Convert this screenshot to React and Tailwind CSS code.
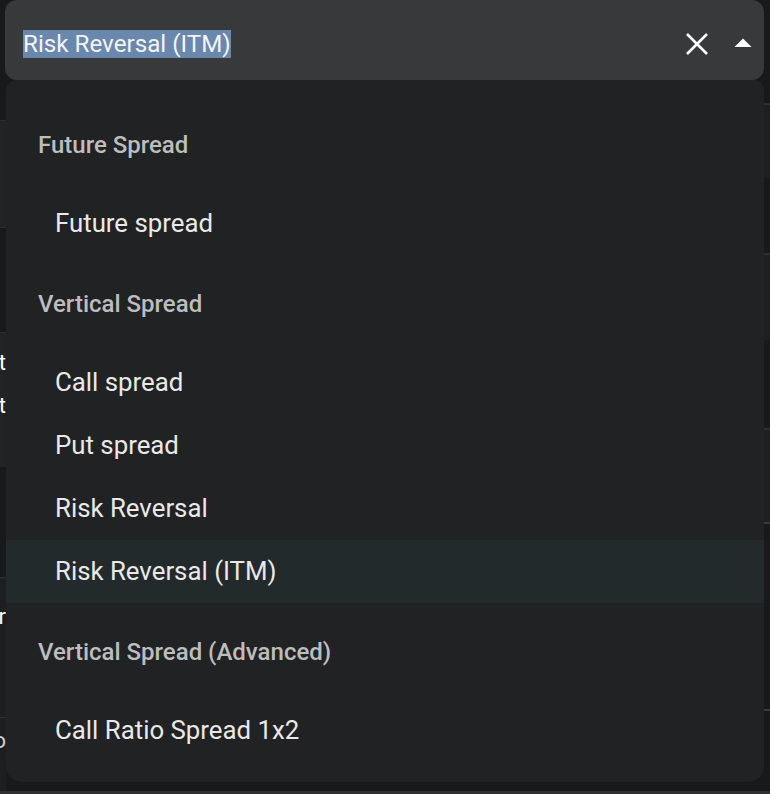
import React from "react";

const groups = [
  { title: "Future Spread", items: ["Future spread"] },
  { title: "Vertical Spread", items: ["Call spread", "Put spread", "Risk Reversal", "Risk Reversal (ITM)"] },
  { title: "Vertical Spread (Advanced)", items: ["Call Ratio Spread 1x2", "Call Ratio Spread 1x3"] },
];

function Header({ children }) {
  return (
    <div className="h-[96px] shrink-0 flex items-center pl-[32px] pt-[1px] text-[24px] font-medium text-[#bdbdbe]">
      {children}
    </div>
  );
}

function Item({ children, active }) {
  return (
    <div
      className={
        "h-[63px] shrink-0 flex items-center pl-[49px] text-[25.8px] text-[#e9e9e9] " +
        (active ? "bg-[#232a2b]" : "")
      }
    >
      {children}
    </div>
  );
}

export default function App() {
  return (
    <div className="relative w-[770px] h-[794px] bg-[#18191b] overflow-hidden font-['Roboto',sans-serif]">
      {/* Input */}
      <div className="mx-[5px] w-[759px] h-[80px] rounded-[12px] bg-[#38393b] flex items-center pt-[8px] pl-[18px] pr-[12px]">
        <span className="bg-[#6a87ad] text-[#f4f4f4] text-[24.2px] leading-[28px]">Risk Reversal (ITM)</span>
        <div className="flex-1" />
        <svg width="26" height="26" viewBox="0 0 26 26" className="mr-[24px]">
          <path d="M3 3 L23 23 M23 3 L3 23" stroke="#ffffff" strokeWidth="2.6" />
        </svg>
        <svg width="18" height="10" viewBox="0 0 18 10" className="mb-[3px]">
          <polygon points="0.5,9 9,0.5 17.5,9" fill="#ffffff" />
        </svg>
      </div>

      {/* Background content behind dropdown */}
      <div className="flex h-[714px]">
        <div className="w-[6px] overflow-hidden flex flex-col text-white text-[22px]">
          <div className="h-[40px]" />
          <div className="h-[107px] bg-[#222325] border-t border-[#2e2f31]" />
          <div className="h-[105px] border-t border-[#2e2f31]" />
          <div className="h-[135px] bg-[#222325] border-t border-[#2e2f31] flex flex-col items-end pt-[8px] leading-[43px]">
            <span>t</span>
            <span>t</span>
          </div>
          <div className="h-[110px]" />
          <div className="h-[140px] bg-[#1d1e20] border-t border-[#2e2f31] flex flex-col items-end pt-[22px]">
            <span>r</span>
          </div>
          <div className="flex-1 bg-[#1d1e20] border-t border-[#2e2f31] flex flex-col items-end pt-[6px]">
            <span className="text-[#cfcfcf]">o</span>
          </div>
        </div>
        <div className="flex-1" />
        <div className="w-[6px] flex flex-col">
          <div className="h-[23px]" />
          <div className="h-[75px] bg-[#1e1f21] border-t-2 border-[#2e2f31]" />
          <div className="h-[75px]" />
          <div className="h-[87px] bg-[#1e1f21] border-t-2 border-[#2e2f31]" />
          <div className="h-[88px]" />
          <div className="h-[94px] bg-[#1e1f21] border-t-2 border-[#2e2f31]" />
          <div className="h-[187px] border-t-2 border-[#3a3b3d]" />
          <div className="flex-1 border-t-2 border-[#3a3b3d]" />
        </div>
      </div>
      <div className="absolute left-0 right-0 bottom-0 h-[3px] bg-[#2e2f31]" />

      {/* Dropdown */}
      <div className="absolute left-[6px] top-[80px] w-[758px] h-[702px] bg-[#212224] rounded-t-[10px] rounded-b-[16px] overflow-hidden">
        <div className="flex flex-col pt-[16px]">
          {groups.map((g) => (
            <React.Fragment key={g.title}>
              <Header>{g.title}</Header>
              {g.items.map((it) => (
                <Item key={it} active={it === "Risk Reversal (ITM)"}>
                  {it}
                </Item>
              ))}
            </React.Fragment>
          ))}
        </div>
      </div>
    </div>
  );
}
